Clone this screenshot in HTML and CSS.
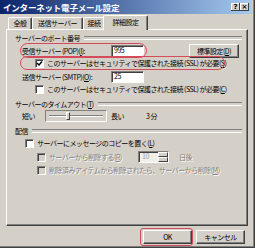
FILE: index.html
```html
<!DOCTYPE html>
<html lang="ja">
<head>
    <meta charset="UTF-8">
    <title>インターネット電子メール設定</title>
    <link rel="stylesheet" href="styles.css">
</head>
<body>
    <div class="window">
        <div class="titlebar">
            <span class="title">インターネット電子メール設定</span>
            <span class="caption-btns">
                <span class="cbtn">?</span>
                <span class="cbtn">×</span>
            </span>
        </div>

        <div class="tabs">
            <span class="tab tab-general">全般</span>
            <span class="tab tab-smtp">送信サーバー</span>
            <span class="tab tab-conn">接続</span>
            <span class="tab tab-adv active">詳細設定</span>
        </div>

        <div class="panel">
            <div class="group-title">サーバーのポート番号</div>
            <div class="row port-row">
                <span class="port-label">受信サーバー (POP)(<u>I</u>):</span>
                <span class="textbox">995</span>
                <span class="button default-btn">標準設定(<u>D</u>)</span>
            </div>
            <div class="row check-row ssl-row">
                <span class="checkbox checked">
                    <svg width="7" height="7" viewBox="0 0 7 7"><path d="M1 3 L3 5 L6 1.5" fill="none" stroke="#000" stroke-width="1.4"/></svg>
                </span>
                <span>このサーバーはセキュリティで保護された接続 (SSL) が必要(<u>S</u>)</span>
            </div>
            <div class="row port-row smtp-row">
                <span class="port-label">送信サーバー (SMTP)(<u>O</u>):</span>
                <span class="textbox">25</span>
            </div>
            <div class="row check-row ssl-row">
                <span class="checkbox"></span>
                <span>このサーバーはセキュリティで保護された接続 (SSL) が必要(<u>C</u>)</span>
            </div>

            <div class="group-title spaced">サーバーのタイムアウト(<u>T</u>)</div>
            <div class="row slider-row">
                <span class="slider-label">短い</span>
                <span class="slider">
                    <span class="track"></span>
                    <span class="thumb"></span>
                </span>
                <span class="slider-long">長い</span>
                <span>3 分</span>
            </div>

            <div class="group-title spaced">配信</div>
            <div class="row check-row keep-row">
                <span class="checkbox"></span>
                <span>サーバーにメッセージのコピーを置く(<u>L</u>)</span>
            </div>
            <div class="row check-row sub-row disabled remove-row">
                <span class="checkbox"></span>
                <span class="remove-label">サーバーから削除する(<u>R</u>)</span>
                <span class="spinner">
                    <span class="spin-value">10</span>
                    <span class="spin-btns"><span class="spin-btn"></span><span class="spin-btn"></span></span>
                </span>
                <span class="days">日後</span>
            </div>
            <div class="row check-row sub-row disabled deleted-row">
                <span class="checkbox"></span>
                <span>削除済みアイテムから削除されたら、サーバーから削除(<u>M</u>)</span>
            </div>
        </div>

        <div class="footer">
            <span class="button">OK</span>
            <span class="button">キャンセル</span>
        </div>

        <!-- red annotation marks -->
        <div class="mark mark-pop"></div>
        <div class="mark mark-ssl"></div>
        <div class="mark mark-ok"></div>
    </div>
</body>
</html>
```

FILE: styles.css
```css
* {
    margin: 0;
    padding: 0;
    box-sizing: border-box;
}

body {
    background-color: #d4d0c8;
    font-family: "Noto Sans CJK JP", sans-serif;
    font-size: 7px;
    letter-spacing: -0.5px;
    color: #000;
}

u {
    text-decoration: underline;
}

.window {
    position: relative;
    width: 255px;
    height: 248px;
    background-color: #d4d0c8;
    border-right: 1px solid #404040;
    border-bottom: 1px solid #404040;
    box-shadow: inset -1px -1px 0 #808080;
    display: flex;
    flex-direction: column;
}

/* Title bar */
.titlebar {
    height: 14px;
    margin-right: 2px;
    padding: 0 3px;
    background: linear-gradient(to right, #0a246a, #a6caf0);
    display: flex;
    align-items: center;
}

.title {
    flex: 1;
    color: #fff;
    font-weight: bold;
    font-size: 8.5px;
    letter-spacing: -0.2px;
    line-height: 1;
}

.caption-btns {
    display: flex;
}

.cbtn {
    width: 9px;
    height: 8px;
    background-color: #d4d0c8;
    box-shadow: inset -1px -1px 0 #404040, inset 1px 1px 0 #fff;
    font: bold 7px "DejaVu Sans", sans-serif;
    letter-spacing: 0;
    line-height: 1;
    display: flex;
    align-items: center;
    justify-content: center;
}

/* Tabs */
.tabs {
    height: 15px;
    padding-left: 8px;
    display: flex;
    align-items: flex-end;
}

.tab {
    height: 12px;
    line-height: 10px;
    text-align: center;
    border-top: 1px solid #fff;
    border-left: 1px solid #fff;
    border-right: 1px solid #404040;
    box-shadow: inset -1px 0 0 #808080;
    border-radius: 2px 2px 0 0;
}

.tab-general { width: 24px; }
.tab-smtp { width: 51px; }
.tab-conn { width: 22px; }

.tab.active {
    position: relative;
    z-index: 1;
    width: 45px;
    height: 15px;
    line-height: 13px;
    margin: 0 -2px -1px;
    background-color: #d4d0c8;
}

/* Tab panel */
.panel {
    height: 197px;
    margin: 0 6px;
    padding: 2px 5px 0 8px;
    border: 1px solid;
    border-color: #fff #404040 #404040 #fff;
    box-shadow: inset -1px -1px 0 #808080;
    display: flex;
    flex-direction: column;
}

.group-title {
    height: 12px;
    display: flex;
    align-items: center;
    white-space: nowrap;
}

.group-title::after {
    content: "";
    flex: 1;
    height: 2px;
    margin-left: 4px;
    border-top: 1px solid #808080;
    border-bottom: 1px solid #fff;
}

.group-title.spaced {
    margin-top: 3px;
}

.row {
    height: 12px;
    display: flex;
    align-items: center;
    white-space: nowrap;
}

.port-row {
    height: 13px;
    padding-left: 7px;
}

.smtp-row {
    margin-top: 1px;
}

.port-label {
    width: 89px;
}

.textbox {
    width: 33px;
    height: 12px;
    padding-left: 2px;
    line-height: 9px;
    background-color: #fff;
    border: 1px solid;
    border-color: #808080 #fff #fff #808080;
    box-shadow: inset 1px 1px 0 #404040;
}

.button {
    height: 14px;
    display: flex;
    align-items: center;
    justify-content: center;
    background-color: #d4d0c8;
    border: 1px solid;
    border-color: #fff #404040 #404040 #fff;
    box-shadow: inset -1px -1px 0 #808080;
}

.default-btn {
    width: 50px;
    margin-left: auto;
    margin-right: 3px;
}

/* Checkboxes */
.checkbox {
    width: 9px;
    height: 9px;
    flex-shrink: 0;
    margin-right: 3px;
    background-color: #fff;
    border: 1px solid;
    border-color: #808080 #fff #fff #808080;
    box-shadow: inset 1px 1px 0 #404040;
    display: flex;
    align-items: center;
    justify-content: center;
}

.ssl-row {
    padding-left: 20px;
}

.keep-row {
    padding-left: 10px;
}

.sub-row {
    padding-left: 22px;
}

.remove-row {
    margin-top: 2px;
}

.deleted-row {
    margin-top: 1px;
}

.disabled {
    color: #808080;
    text-shadow: 1px 1px 0 #fff;
}

.disabled .checkbox {
    background-color: #d4d0c8;
}

.remove-label {
    width: 89px;
}

.spinner {
    width: 31px;
    height: 12px;
    display: flex;
    background-color: #f1efea;
    border: 1px solid;
    border-color: #808080 #fff #fff #808080;
    box-shadow: inset 1px 1px 0 #404040;
    text-shadow: none;
}

.spin-value {
    flex: 1;
    padding-left: 3px;
    line-height: 9px;
    color: #a0a0a0;
}

.spin-btns {
    width: 10px;
    display: flex;
    flex-direction: column;
}

.spin-btn {
    flex: 1;
    background-color: #d4d0c8;
    border: 1px solid;
    border-color: #fff #404040 #404040 #fff;
}

.days {
    margin-left: 10px;
}

/* Slider */
.slider-row {
    padding-left: 7px;
}

.slider-label {
    width: 23px;
}

.slider {
    position: relative;
    width: 62px;
    height: 12px;
    padding: 0 3px;
    border: 1px solid;
    border-color: #808080 #fff #fff #808080;
    display: flex;
    align-items: center;
}

.track {
    flex: 1;
    height: 2px;
    border-top: 1px solid #808080;
    border-bottom: 1px solid #fff;
}

.thumb {
    position: absolute;
    left: 20px;
    top: 1px;
    width: 4px;
    height: 8px;
    background-color: #d4d0c8;
    border: 1px solid;
    border-color: #fff #404040 #404040 #fff;
}

.slider-long {
    width: 35px;
    margin-left: 4px;
}

/* Footer buttons */
.footer {
    margin-top: 4px;
    padding-right: 9px;
    display: flex;
    justify-content: flex-end;
    gap: 4px;
}

.footer .button {
    width: 49px;
}

/* Red annotation marks */
.mark {
    position: absolute;
    border: 1.5px solid #d44c5a;
}

.mark-pop {
    left: 20px;
    top: 43px;
    width: 127px;
    height: 15px;
    border-radius: 8px;
}

.mark-ssl {
    left: 20px;
    top: 56px;
    width: 205px;
    height: 14px;
    border-radius: 7px;
}

.mark-ok {
    left: 140px;
    top: 228px;
    width: 53px;
    height: 18px;
    border-radius: 3px;
}
```
